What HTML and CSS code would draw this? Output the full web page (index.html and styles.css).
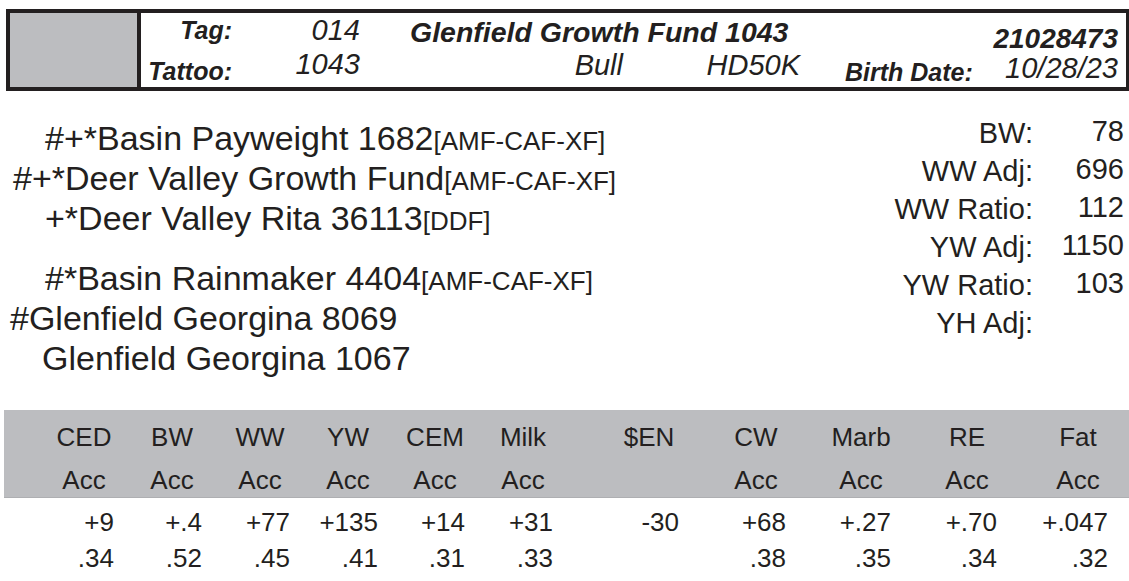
FILE: index.html
```html
<!DOCTYPE html>
<html lang="en">
<head>
<meta charset="utf-8">
<title>Glenfield Growth Fund 1043</title>
<link rel="stylesheet" href="styles.css">
</head>
<body>
<div class="header">
  <div class="swatch"></div>
  <div class="info">
    <div class="row r1">
      <span class="lbl w-lbl tag-lbl">Tag:</span>
      <span class="val w-val tag-val">014</span>
      <span class="title">Glenfield Growth Fund 1043</span>
      <span class="reg">21028473</span>
    </div>
    <div class="row r2">
      <span class="lbl w-lbl tat-lbl">Tattoo:</span>
      <span class="val w-val tat-val">1043</span>
      <span class="val sex">Bull</span>
      <span class="val gen">HD50K</span>
      <span class="lbl bd-lbl">Birth Date:</span>
      <span class="val bd-val">10/28/23</span>
    </div>
  </div>
</div>

<div class="main">
  <div class="pedigree">
    <div class="ped in-a">#+*Basin Payweight 1682<span class="reg-tag">[AMF-CAF-XF]</span></div>
    <div class="ped in-b">#+*Deer Valley Growth Fund<span class="reg-tag">[AMF-CAF-XF]</span></div>
    <div class="ped in-a">+*Deer Valley Rita 36113<span class="reg-tag">[DDF]</span></div>
    <div class="ped in-a grp">#*Basin Rainmaker 4404<span class="reg-tag">[AMF-CAF-XF]</span></div>
    <div class="ped in-c">#Glenfield Georgina 8069</div>
    <div class="ped in-d">Glenfield Georgina 1067</div>
  </div>
  <div class="stats">
    <div class="stat-labels">
      <div>BW:</div>
      <div>WW Adj:</div>
      <div>WW Ratio:</div>
      <div>YW Adj:</div>
      <div>YW Ratio:</div>
      <div>YH Adj:</div>
    </div>
    <div class="stat-values">
      <div>78</div>
      <div>696</div>
      <div>112</div>
      <div>1150</div>
      <div>103</div>
    </div>
  </div>
</div>

<div class="epd band">
  <div class="h">CED</div><div class="h">BW</div><div class="h">WW</div><div class="h">YW</div><div class="h">CEM</div><div class="h">Milk</div><div class="h">$EN</div><div class="h">CW</div><div class="h">Marb</div><div class="h">RE</div><div class="h">Fat</div>
  <div class="h">Acc</div><div class="h">Acc</div><div class="h">Acc</div><div class="h">Acc</div><div class="h">Acc</div><div class="h">Acc</div><div class="h"></div><div class="h">Acc</div><div class="h">Acc</div><div class="h">Acc</div><div class="h">Acc</div>
</div>
<div class="epd values">
  <div class="v">+9</div><div class="v">+.4</div><div class="v">+77</div><div class="v">+135</div><div class="v">+14</div><div class="v">+31</div><div class="v">-30</div><div class="v">+68</div><div class="v">+.27</div><div class="v">+.70</div><div class="v">+.047</div>
  <div class="v">.34</div><div class="v">.52</div><div class="v">.45</div><div class="v">.41</div><div class="v">.31</div><div class="v">.33</div><div class="v"></div><div class="v">.38</div><div class="v">.35</div><div class="v">.34</div><div class="v">.32</div>
</div>
</body>
</html>
```
FILE: styles.css
```css
html, body {
  margin: 0;
  padding: 0;
  background: #ffffff;
  overflow: hidden;
}

body {
  width: 1129px;
  height: 581px;
  font-family: "Liberation Sans", Arial, Helvetica, sans-serif;
  color: #231f20;
}

/* ---------- header box ---------- */
.header {
  box-sizing: border-box;
  margin: 9px 0 0 6px;
  width: 1124px;
  height: 82px;
  border: 4px solid #231f20;
  display: flex;
}

.swatch {
  width: 127px;
  background: #bcbdc0;
  border-right: 4px solid #231f20;
}

.info {
  flex: 1;
  display: flex;
  flex-direction: column;
}

.row {
  display: flex;
  align-items: flex-start;
  height: 37px;
  padding-right: 8px;
  font-style: italic;
  line-height: 1;
  white-space: nowrap;
}

.lbl {
  font-weight: bold;
  font-size: 25px;
}

.val {
  font-size: 29px;
}

.w-lbl {
  width: 91px;
  text-align: right;
}

.w-val {
  width: 128px;
  text-align: right;
}

.tag-lbl { margin-top: 5px; }
.tag-val { margin-top: 3px; }

.title {
  font-weight: bold;
  font-size: 28.5px;
  margin-left: 50px;
  margin-top: 5px;
}

.reg {
  font-weight: bold;
  font-size: 28px;
  line-height: 24px;
  margin-left: auto;
  margin-top: 14px;
}

.tat-lbl { margin-top: 9px; }
.tat-val { margin-top: 0; }

.sex {
  width: 263px;
  text-align: right;
  margin-top: 1px;
}

.gen {
  width: 177px;
  text-align: right;
  margin-top: 1px;
}

.bd-lbl {
  margin-left: 45px;
  margin-top: 10px;
}

.bd-val {
  line-height: 24px;
  margin-left: auto;
  margin-top: 6px;
}

/* ---------- pedigree + stats ---------- */
.main {
  display: flex;
  margin-top: 19px;
}

.pedigree {
  padding-top: 8px;
}

.ped {
  font-size: 34px;
  line-height: 40px;
  white-space: nowrap;
}

.reg-tag {
  font-size: 26px;
  line-height: 1;
}

.in-a { padding-left: 45px; }
.in-b { padding-left: 13px; }
.in-c { padding-left: 10px; }
.in-d { padding-left: 42px; }
.grp { margin-top: 20px; }

.stats {
  margin-left: auto;
  padding-right: 5px;
  display: flex;
  font-size: 29px;
  line-height: 38px;
}

.stat-labels {
  padding-top: 4px;
  text-align: right;
}

.stat-values {
  width: 91px;
  padding-top: 2px;
  text-align: right;
}

/* ---------- EPD table ---------- */
.epd {
  margin-left: 4px;
  display: grid;
  grid-template-columns: 110px 88px 88px 88px 87px 88px 126px 107px 105px 106px 111px;
  font-size: 26px;
  white-space: nowrap;
}

.band {
  box-sizing: border-box;
  margin-top: 32px;
  height: 88px;
  padding-top: 6px;
  background: #bcbdc0;
  border-bottom: 1px solid #aeafb2;
  grid-auto-rows: 43px;
  line-height: 43px;
}

.h {
  justify-self: end;
  width: 64px;
  margin-right: -2px;
  text-align: center;
}

.values {
  padding-top: 6px;
  grid-auto-rows: 36px;
  line-height: 36px;
}

.v {
  justify-self: end;
  text-align: right;
}
```
